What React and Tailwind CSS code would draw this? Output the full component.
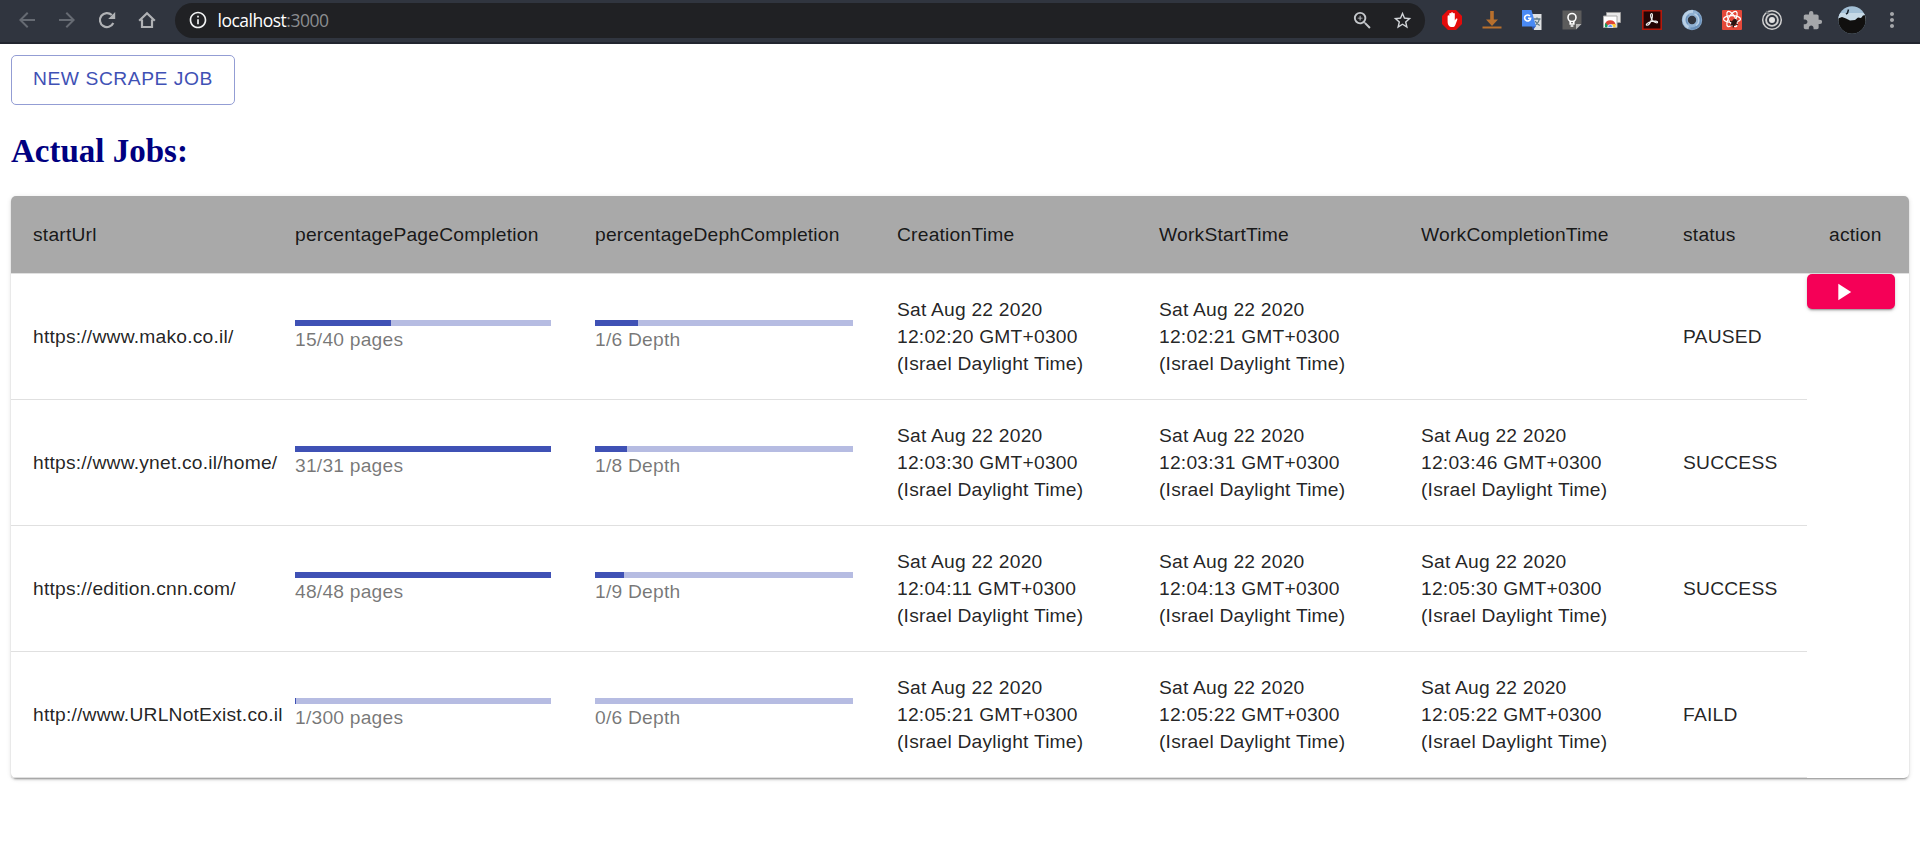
import React from "react";
import {
  MdArrowBack,
  MdArrowForward,
  MdInfoOutline,
  MdZoomIn,
  MdStarBorder,
  MdExtension,
  MdMoreVert,
  MdPlayArrow,
} from "react-icons/md";

const jobs = [
  {
    url: "https://www.mako.co.il/",
    pages: [15, 40],
    depth: [1, 6],
    created: "12:02:20",
    started: "12:02:21",
    completed: null,
    status: "PAUSED",
    action: true,
  },
  {
    url: "https://www.ynet.co.il/home/",
    pages: [31, 31],
    depth: [1, 8],
    created: "12:03:30",
    started: "12:03:31",
    completed: "12:03:46",
    status: "SUCCESS",
  },
  {
    url: "https://edition.cnn.com/",
    pages: [48, 48],
    depth: [1, 9],
    created: "12:04:11",
    started: "12:04:13",
    completed: "12:05:30",
    status: "SUCCESS",
  },
  {
    url: "http://www.URLNotExist.co.il",
    pages: [1, 300],
    depth: [0, 6],
    created: "12:05:21",
    started: "12:05:22",
    completed: "12:05:22",
    status: "FAILD",
  },
];

const headings = [
  "startUrl",
  "percentagePageCompletion",
  "percentageDephCompletion",
  "CreationTime",
  "WorkStartTime",
  "WorkCompletionTime",
  "status",
  "action",
];

function Slot({ children }) {
  return <span className="flex h-10 w-10 shrink-0 items-center justify-center">{children}</span>;
}

function ReloadIcon() {
  return (
    <svg width="18" height="18" viewBox="0 0 18 18" fill="none">
      <path d="M15.300 12A7 7 0 1 1 13.800 4" stroke="#b0b2b5" strokeWidth="2.200" />
      <path d="M17.200 1v7h-7z" fill="#b0b2b5" />
    </svg>
  );
}

function HomeIcon() {
  return (
    <svg width="18" height="18" viewBox="0 0 18 18" fill="none" stroke="#b0b2b5" strokeWidth="2.200">
      <path d="M1.200 9.800 9 2.200l7.800 7.600M4 8.500V16h10V8.500" />
    </svg>
  );
}

function StopHandIcon() {
  return (
    <svg width="22" height="22" viewBox="0 0 22 22">
      <path d="M7 1h8l6 6v8l-6 6H7l-6-6V7z" fill="#e30b0b" />
      <path
        d="M6.600 12V7.200c0-1.300 1.700-1.300 1.700 0V5c0-1.300 1.800-1.300 1.800 0v-.8c0-1.300 1.900-1.300 1.900 0V5c0-1.300 1.800-1.300 1.800 0v6.500l1-1.600c.7-1 2-.4 1.500.8l-2 5.200c-.6 1.500-1.500 2.200-3.200 2.200-3 0-4.500-2-4.500-6.100z"
        fill="#fff"
      />
    </svg>
  );
}

function DownloadIcon() {
  return (
    <svg width="20" height="20" viewBox="0 0 20 20" fill="#b8702d">
      <path d="M8.200 1h3.600v8.500H16L10 16 4 9.500h4.200zM.5 16.600h19v2H.5z" />
    </svg>
  );
}

function TranslateIcon() {
  return (
    <svg width="22" height="22" viewBox="0 0 22 22">
      <path d="M8 5h12.500v16H13z" fill="#dfe1e3" />
      <path
        d="M12.500 10h7M16 8.500V10M18.300 10c-.5 3-2 5-4.500 6.500M14.200 12c1 2 2.300 3.500 4.500 4.500"
        stroke="#5f7885"
        strokeWidth="1.300"
        fill="none"
      />
      <path d="M10.500 17H15l-3 4z" fill="#2f56b0" />
      <path d="M1 1h9.500L15 17.500H1z" fill="#4a8af4" />
      <path d="M8.900 7A3 3 0 1 0 9.600 9.300H7" stroke="#fff" strokeWidth="1.600" fill="none" />
    </svg>
  );
}

function BulbIcon() {
  return (
    <svg width="20" height="20" viewBox="0 0 20 20">
      <path d="M.5.500h19v13.500l-5.500 5.500H.5z" fill="#5c5c5c" />
      <path d="M14 19.500V14h5.500z" fill="#b8b8b8" />
      <circle cx="10" cy="7.500" r="4" fill="none" stroke="#fff" strokeWidth="1.600" />
      <path d="M8.200 11v3h3.600v-3M8.600 16h2.800" fill="none" stroke="#fff" strokeWidth="1.600" />
    </svg>
  );
}

function WindowsIcon() {
  return (
    <svg width="20" height="20" viewBox="0 0 20 20">
      <path d="M4.500 2.500h14v10h-14z" fill="#e8e8e8" stroke="#9b9b9b" />
      <path d="M1.500 6h13.500v11.500H1.500z" fill="#fff" stroke="#a8a8a8" />
      <path d="M2.800 15a5.500 5.500 0 0 1 10.900 0z" fill="#dc4437" />
      <path d="M3 17.300a6 6 0 0 1 .6-4.500l3.800 4.500z" fill="#169c5a" />
      <path d="M13.600 17.300a6 6 0 0 0-.2-3.300H9v3.300z" fill="#fdc52c" />
      <path d="M5.600 17.300a2.700 2.700 0 0 1 5.400 0z" fill="#4284f3" stroke="#fff" strokeWidth=".8" />
    </svg>
  );
}

function PdfIcon() {
  return (
    <svg width="22" height="22" viewBox="0 0 22 22">
      <path d="M1.800 1.800h18.400v18.400H1.800z" fill="#230505" stroke="#b3190c" strokeWidth="1.600" />
      <path
        d="M10.200 4.800c1.800-.7 1.400 3.200.3 6-1 2.500-3.200 5.800-4.700 5.400-1.600-.6 1.400-3 4.700-3.700 3.200-.6 6.200-.5 6 .8-.3 1.200-3.200 0-4.900-2C9.800 9.500 8.900 5.300 10.200 4.800z"
        fill="none"
        stroke="#f2f2f2"
        strokeWidth="1.200"
      />
    </svg>
  );
}

function SwirlIcon() {
  return (
    <svg width="22" height="22" viewBox="0 0 22 22" fill="none">
      <circle cx="11" cy="11" r="7.200" stroke="#8fb0d2" strokeWidth="6" />
      <path d="M12 2.500C6 2 2.500 6.500 3 11.500c.3 3 2 5.500 4.500 6.800" stroke="#b9d0e6" strokeWidth="2.800" />
      <path d="M9.500 19.500c5 .8 9.500-3 9.700-8 0-2.500-1-4.800-2.700-6.200" stroke="#6c93bd" strokeWidth="2.400" />
      <path d="M13.500 5a6.500 6.500 0 0 1 1.500 11.500" stroke="#b9d0e6" strokeWidth="1.500" />
      <path d="M8 6a5.800 5.800 0 0 0-1 9" stroke="#6c93bd" strokeWidth="1.300" />
    </svg>
  );
}

function ReactBugIcon() {
  return (
    <svg width="22" height="22" viewBox="0 0 22 22" fill="none">
      <rect x="1" y="1" width="20" height="20" rx="1" fill="#e5493a" />
      <g stroke="#fff" strokeWidth="1.200">
        <ellipse cx="11" cy="10" rx="8.500" ry="3.400" />
        <ellipse cx="11" cy="10" rx="8.500" ry="3.400" transform="rotate(60 11 10)" />
        <ellipse cx="11" cy="10" rx="8.500" ry="3.400" transform="rotate(120 11 10)" />
      </g>
      <ellipse cx="13" cy="13.500" rx="2.400" ry="3.600" fill="#2a1412" transform="rotate(30 13 13.500)" />
      <path d="m9 12 8 4M9.500 16.500l7-5M12 18.500l3-8.500" stroke="#2a1412" strokeWidth="1.200" />
    </svg>
  );
}

function TargetIcon() {
  return (
    <svg width="22" height="22" viewBox="0 0 22 22" fill="none" stroke="#cfcfcf">
      <circle cx="11" cy="11" r="9.300" strokeWidth="1.500" />
      <circle cx="11" cy="11" r="5.900" strokeWidth="1.900" />
      <circle cx="11" cy="11" r="3" fill="#e2e2e2" stroke="none" />
      <path d="M5 2.500 8 5" stroke="#6f7378" strokeWidth="2.500" />
    </svg>
  );
}

function Avatar() {
  return (
    <svg width="28" height="28" viewBox="0 0 28 28">
      <defs>
        <clipPath id="avatar-clip">
          <circle cx="14" cy="14" r="13.700" />
        </clipPath>
      </defs>
      <g clipPath="url(#avatar-clip)">
        <path d="M0 0h28v28H0z" fill="#a3c0d6" />
        <path d="M0 7h28v8H0z" fill="#c6d9e6" />
        <path d="M0 12.500 4 11l4 1.500 4 2 5-.5 3-2.500 3 .5 2-2.500L28 9v19H0z" fill="#11100f" />
        <path d="M10.500 3.500 9.500 7 8 8.200" stroke="#16202a" strokeWidth="1.500" fill="none" />
      </g>
    </svg>
  );
}

function BrowserBar() {
  return (
    <header className="flex h-11 items-start justify-between border-b-2 border-[#22252f] bg-[#30353f] pl-[7px] pr-2">
      <div className="flex h-10 grow items-center">
        <Slot>
          <MdArrowBack size={24} color="#666b73" />
        </Slot>
        <Slot>
          <MdArrowForward size={24} color="#666b73" />
        </Slot>
        <Slot>
          <ReloadIcon />
        </Slot>
        <Slot>
          <HomeIcon />
        </Slot>
        <div className="ml-2 flex h-[35px] w-[1250px] items-center rounded-full bg-[#202124] pl-[13px] pr-[3px]">
          <MdInfoOutline size={20} color="#f1f3f4" />
          <div className="ml-[9.5px] grow whitespace-nowrap font-['Open_Sans',sans-serif] text-[17.5px] leading-6 tracking-[-0.5px] text-white">
            localhost<span className="text-[#8b8d90]">:3000</span>
          </div>
          <Slot>
            <MdZoomIn size={23} color="#c4c7cb" />
          </Slot>
          <Slot>
            <MdStarBorder size={21} color="#d2d5d9" />
          </Slot>
        </div>
      </div>
      <div className="flex h-10 items-center">
        <Slot><StopHandIcon /></Slot>
        <Slot><DownloadIcon /></Slot>
        <Slot><TranslateIcon /></Slot>
        <Slot><BulbIcon /></Slot>
        <Slot><WindowsIcon /></Slot>
        <Slot><PdfIcon /></Slot>
        <Slot><SwirlIcon /></Slot>
        <Slot><ReactBugIcon /></Slot>
        <Slot><TargetIcon /></Slot>
        <Slot><MdExtension size={21} color="#a5a7aa" /></Slot>
        <Slot><Avatar /></Slot>
        <Slot><MdMoreVert size={24} color="#a5a7aa" /></Slot>
      </div>
    </header>
  );
}

function Progress({ value, unit }) {
  const [done, total] = value;
  return (
    <div>
      <div className="h-[6px] bg-[#b6bce2]">
        <div className="h-full bg-[#3f51b5]" style={{ width: `${(done / total) * 100}%` }} />
      </div>
      <div className="leading-[27px] text-black/54">
        {done}/{total} {unit}
      </div>
    </div>
  );
}

function DateTime({ time }) {
  if (!time) return null;
  return (
    <>
      Sat Aug 22 2020
      <br />
      {time} GMT+0300
      <br />
      (Israel Daylight Time)
    </>
  );
}

function Cell({ children }) {
  return (
    <td className="h-[126px] whitespace-nowrap border-b border-[#e0e0e0] px-[22px] py-0 align-middle">
      {children}
    </td>
  );
}

function JobTable() {
  return (
    <div className="h-[582px] rounded-[5px] bg-white shadow-[0px_3px_1px_-2px_rgba(0,0,0,0.2),0px_2px_2px_0px_rgba(0,0,0,0.14),0px_1px_5px_0px_rgba(0,0,0,0.12)]">
      <table className="w-full table-fixed border-separate border-spacing-0 text-left text-[19.25px] leading-[27px] tracking-[0.206px] text-black/87">
        <colgroup>
          <col className="w-[262px]" />
          <col className="w-[300px]" />
          <col className="w-[302px]" />
          <col className="w-[262px]" />
          <col className="w-[262px]" />
          <col className="w-[262px]" />
          <col className="w-[146px]" />
          <col className="w-[102px]" />
        </colgroup>
        <thead>
          <tr>
            {headings.map((h) => (
              <th
                key={h}
                className="h-[78px] whitespace-nowrap border-b border-[#e0e0e0] bg-[#a9a9a9] bg-clip-padding px-[22px] py-0 font-normal first:rounded-tl-[5px] last:rounded-tr-[5px]"
              >
                {h}
              </th>
            ))}
          </tr>
        </thead>
        <tbody>
          {jobs.map((job) => (
            <tr key={job.url}>
              <Cell>{job.url}</Cell>
              <Cell><Progress value={job.pages} unit="pages" /></Cell>
              <Cell><Progress value={job.depth} unit="Depth" /></Cell>
              <Cell><DateTime time={job.created} /></Cell>
              <Cell><DateTime time={job.started} /></Cell>
              <Cell><DateTime time={job.completed} /></Cell>
              <Cell>{job.status}</Cell>
              <td className="p-0 align-top">
                {job.action && (
                  <button
                    aria-label="Resume"
                    className="flex h-[35px] w-[88px] items-center rounded-[5px] bg-[#f50057] pl-[22px] text-white shadow-[0px_3px_1px_-2px_rgba(0,0,0,0.2),0px_2px_2px_0px_rgba(0,0,0,0.14),0px_1px_5px_0px_rgba(0,0,0,0.12)]"
                  >
                    <MdPlayArrow size={28} />
                  </button>
                )}
              </td>
            </tr>
          ))}
        </tbody>
      </table>
    </div>
  );
}

export default function App() {
  return (
    <div className="h-[868px] overflow-hidden bg-white font-['Liberation_Sans',Arial,sans-serif]">
      <BrowserBar />
      <main className="px-[11px] pt-[11px]">
        <button className="flex h-[50px] w-[224px] items-center justify-center whitespace-nowrap rounded-[5px] border border-[#939dd4] pb-px text-[19.25px] tracking-[0.55px] text-[#3f51b5]">
          NEW SCRAPE JOB
        </button>
        <h2 className="mb-[26px] mt-[28px] font-['Liberation_Serif','Times_New_Roman',serif] text-[33px] font-bold leading-[37px] text-[#000080]">
          Actual Jobs:
        </h2>
        <JobTable />
      </main>
    </div>
  );
}
